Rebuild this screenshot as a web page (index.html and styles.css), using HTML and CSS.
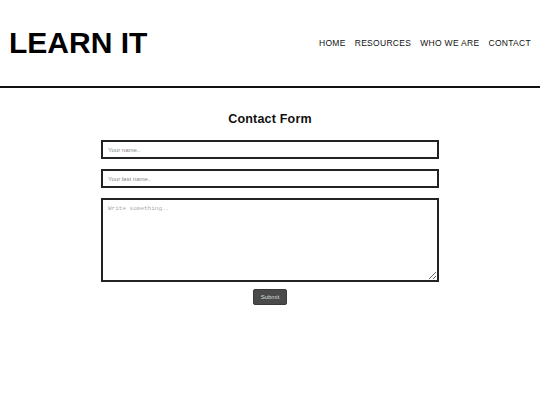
FILE: index.html
```html
<!DOCTYPE html>
<html>
<head>
<meta charset="utf-8">
<link rel="stylesheet" href="styles.css">
</head>
<body>
<header class="site-header">
  <div class="logo">LEARN IT</div>
  <nav class="nav">
    <a href="#">HOME</a>
    <a href="#">RESOURCES</a>
    <a href="#">WHO WE ARE</a>
    <a href="#">CONTACT</a>
  </nav>
</header>
<main class="main">
  <h1 class="title">Contact Form</h1>
  <form class="form">
    <input class="field" type="text" placeholder="Your name..">
    <input class="field" type="text" placeholder="Your last name..">
    <textarea class="area" placeholder="Write something.."></textarea>
    <button class="submit" type="button">Submit</button>
  </form>
</main>
</body>
</html>
```
FILE: styles.css
```css
html, body {
  margin: 0;
  padding: 0;
  background: #fff;
  font-family: "Liberation Sans", Arial, sans-serif;
  color: #111;
}
.site-header {
  height: 86px;
  display: flex;
  align-items: center;
  justify-content: space-between;
  padding: 0 9px;
  border-bottom: 2px solid #111;
}
.logo {
  font-size: 30px;
  font-weight: bold;
  color: #000;
  line-height: 1;
}
.nav {
  display: flex;
  gap: 9px;
  font-size: 8.5px;
  line-height: 1;
}
.nav a {
  color: #111;
  text-decoration: none;
  letter-spacing: 0.3px;
}
.main {
  display: flex;
  flex-direction: column;
  align-items: center;
}
.title {
  margin: 24px 0 14px;
  font-size: 12.5px;
  line-height: 14px;
  font-weight: bold;
  letter-spacing: 0.2px;
}
.form {
  width: 338px;
  display: flex;
  flex-direction: column;
  align-items: center;
}
.field, .area {
  box-sizing: border-box;
  width: 100%;
  border: 2px solid #222;
  margin: 0 0 10px;
  padding: 0 5px;
  background: #fff;
  outline: none;
}
.field {
  height: 19px;
  font-family: "Liberation Sans", Arial, sans-serif;
  font-size: 6px;
}
.field::placeholder {
  color: #888;
}
.area {
  height: 84px;
  margin-bottom: 7px;
  padding: 5px;
  font-family: "Liberation Mono", monospace;
  font-size: 6px;
  resize: vertical;
  display: block;
}
.area::placeholder {
  color: #aaa;
}
.submit {
  width: 34px;
  height: 16px;
  padding: 0;
  border: 1px solid #3a3a3a;
  border-radius: 2px;
  background: #4a4a4a;
  color: #ddd;
  font-family: "Liberation Sans", Arial, sans-serif;
  font-size: 6px;
}
```
